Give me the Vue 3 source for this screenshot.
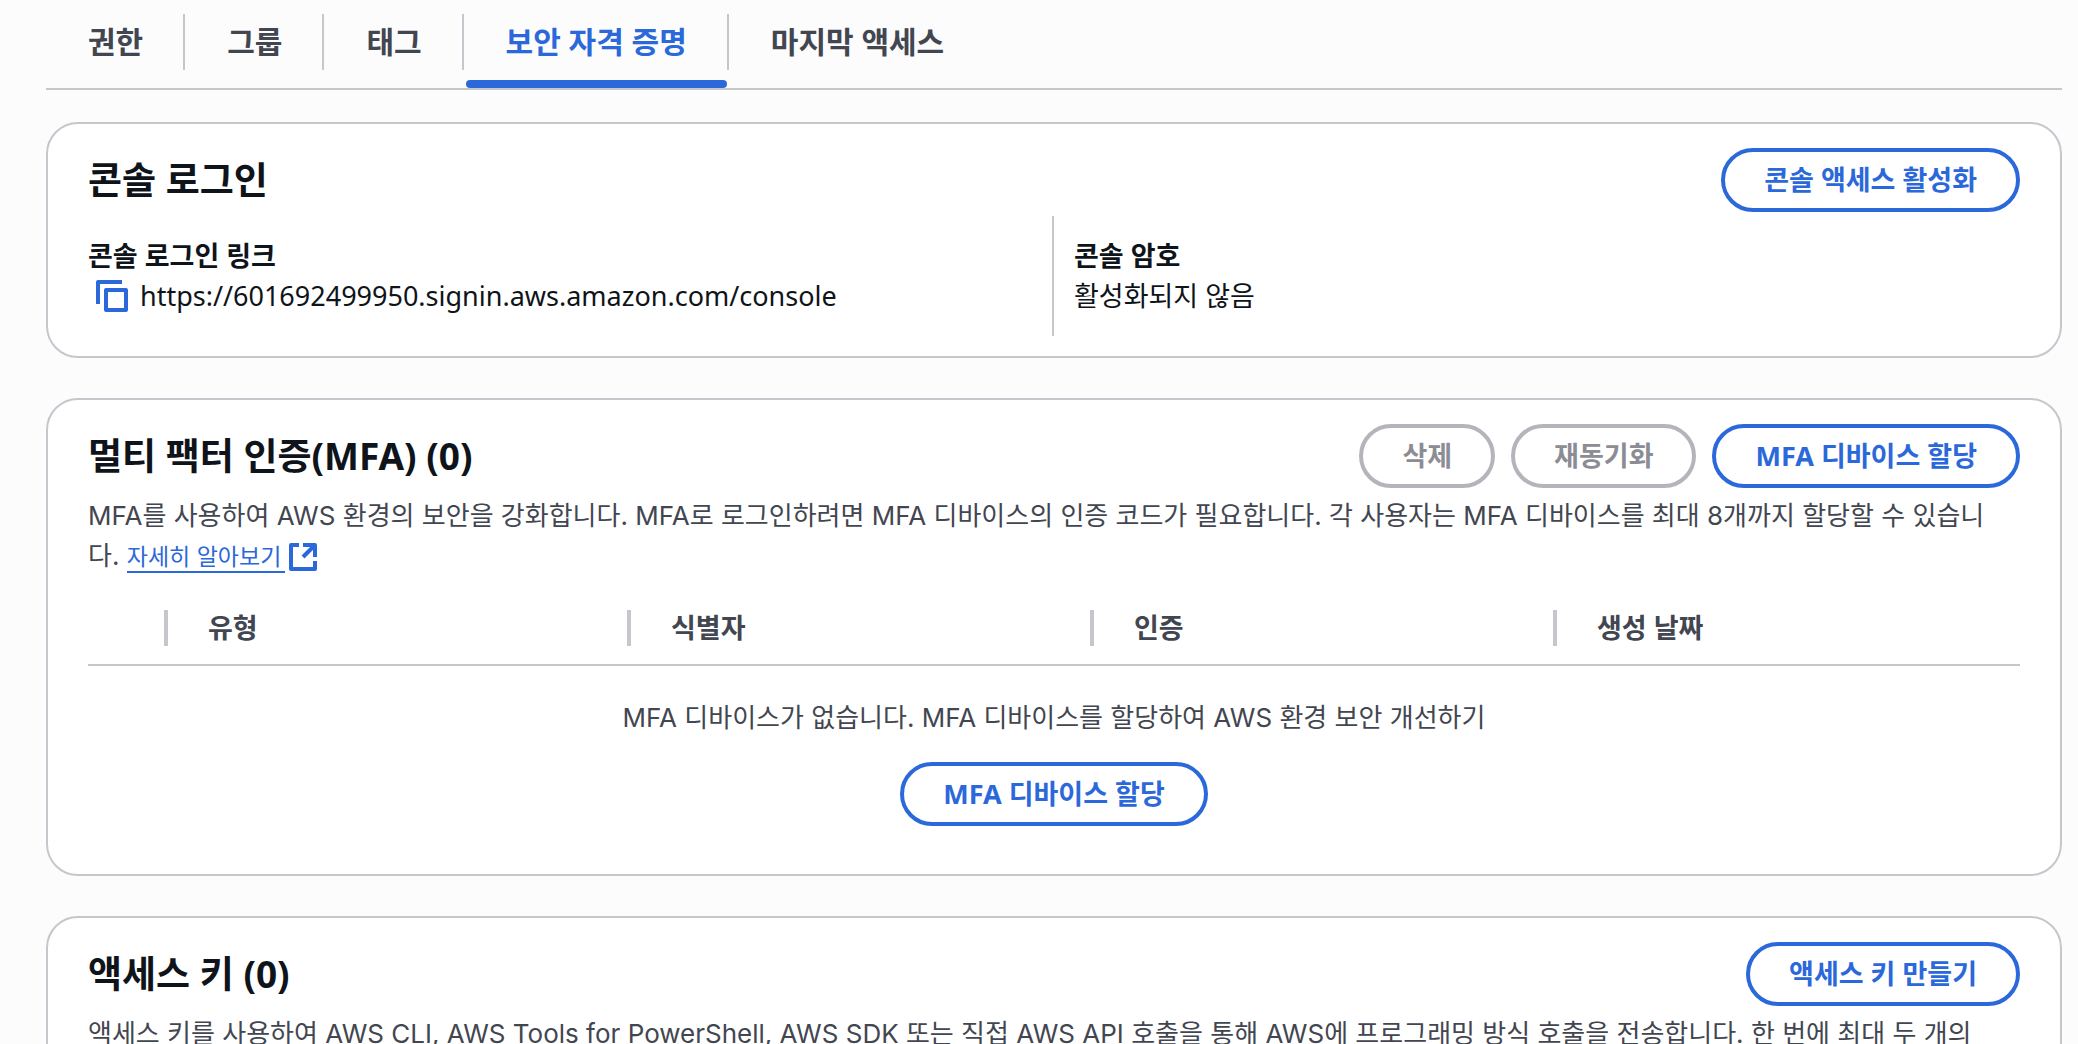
<template>
  <main class="page">
    <nav class="tabs">
      <div v-for="tab in tabs" :key="tab" class="tab-item">
        <button class="tab" :class="{ active: tab === activeTab }" @click="activeTab = tab">
          {{ tab }}
        </button>
      </div>
    </nav>

    <section class="card">
      <header class="card-header">
        <h2>콘솔 로그인</h2>
        <button class="btn">콘솔 액세스 활성화</button>
      </header>
      <dl class="pairs">
        <div class="pair">
          <dt>콘솔 로그인 링크</dt>
          <dd class="link-value">
            <button class="copy" aria-label="복사">
              <svg viewBox="0 0 32 32" width="32" height="32" fill="none" stroke="currentColor" stroke-width="4" stroke-linejoin="round">
                <path d="M2 24V2H26" />
                <path d="M10 10H30V30H10Z" />
              </svg>
            </button>
            <span>https://601692499950.signin.aws.amazon.com/console</span>
          </dd>
        </div>
        <div class="pair divided">
          <dt>콘솔 암호</dt>
          <dd>활성화되지 않음</dd>
        </div>
      </dl>
    </section>

    <section class="card">
      <header class="card-header">
        <h2>멀티 팩터 인증(MFA) (0)</h2>
        <div class="actions">
          <button class="btn" disabled>삭제</button>
          <button class="btn" disabled>재동기화</button>
          <button class="btn">MFA 디바이스 할당</button>
        </div>
      </header>
      <p class="description">
        MFA를 사용하여 AWS 환경의 보안을 강화합니다. MFA로 로그인하려면 MFA 디바이스의 인증 코드가 필요합니다. 각 사용자는 MFA 디바이스를 최대 8개까지 할당할 수 있습니다.
        <a href="#" class="more"><span>자세히 알아보기</span><svg viewBox="0 0 28 28" width="28" height="28" fill="none" stroke="currentColor" stroke-width="4">
          <path d="M10 2H2V26H26V18" stroke-linejoin="round" />
          <path d="M14 2H26V14" stroke-linejoin="round" />
          <path d="M26 2L14 14" />
        </svg></a>
      </p>
      <table class="devices">
        <thead>
          <tr>
            <th class="select-col"></th>
            <th v-for="column in columns" :key="column">{{ column }}</th>
          </tr>
        </thead>
        <tbody>
          <tr>
            <td colspan="5">
              <p>MFA 디바이스가 없습니다. MFA 디바이스를 할당하여 AWS 환경 보안 개선하기</p>
              <button class="btn">MFA 디바이스 할당</button>
            </td>
          </tr>
        </tbody>
      </table>
    </section>

    <section class="card">
      <header class="card-header">
        <h2>액세스 키 (0)</h2>
        <button class="btn">액세스 키 만들기</button>
      </header>
      <p class="description">
        액세스 키를 사용하여 AWS CLI, AWS Tools for PowerShell, AWS SDK 또는 직접 AWS API 호출을 통해 AWS에 프로그래밍 방식 호출을 전송합니다. 한 번에 최대 두 개의
      </p>
    </section>
  </main>
</template>

<script setup>
import { ref } from 'vue'

const tabs = ['권한', '그룹', '태그', '보안 자격 증명', '마지막 액세스']
const activeTab = ref('보안 자격 증명')
const columns = ['유형', '식별자', '인증', '생성 날짜']
</script>

<style>
body {
  margin: 0;
  background: #fcfcfd;
}
</style>

<style scoped>
.page {
  box-sizing: border-box;
  height: 100vh;
  overflow: hidden;
  padding: 0 16px 0 46px;
  background: #fcfcfd;
  color: #0f141a;
  font-family: "Noto Sans", "Noto Sans CJK KR", sans-serif;
  font-size: 27px;
  line-height: 40px;
}
button {
  font-family: inherit;
  cursor: pointer;
}
.tabs {
  display: flex;
  border-bottom: 2px solid #c6c6cd;
  margin-bottom: 32px;
}
.tab-item {
  position: relative;
  padding: 0 2px;
}
.tab-item:not(:last-child)::after {
  content: "";
  position: absolute;
  top: 14px;
  right: 0;
  width: 2px;
  height: 56px;
  background: #c6c6cd;
}
.tab {
  display: block;
  height: 88px;
  padding: 0 40px 8px;
  border: 0;
  background: none;
  color: #424650;
  font-size: 30px;
  font-weight: 700;
  position: relative;
}
.tab.active {
  color: #2b68da;
}
.tab.active::after {
  content: "";
  position: absolute;
  left: 0;
  right: 0;
  bottom: 0;
  height: 8px;
  border-radius: 4px;
  background: #2b68da;
}
.card {
  border: 2px solid #c6c6cd;
  border-radius: 32px;
  background: #fff;
  padding: 24px 40px 20px;
  margin-bottom: 40px;
}
.card-header {
  display: flex;
  align-items: center;
  justify-content: space-between;
}
h2 {
  margin: 0;
  font-size: 37px;
  line-height: 48px;
  font-weight: 700;
}
.actions {
  display: flex;
  gap: 16px;
}
.btn {
  height: 64px;
  padding: 0 39px 4px;
  border: 4px solid #2b68da;
  border-radius: 32px;
  background: #fff;
  color: #2b68da;
  font-size: 27px;
  font-weight: 700;
  white-space: nowrap;
}
.btn:disabled {
  border-color: #b4b4bb;
  color: #8c8c94;
  cursor: default;
}
.pairs {
  display: grid;
  grid-template-columns: 1fr 1fr;
  margin: 4px 0 0;
}
.pair {
  padding: 20px 0;
}
.divided {
  margin-left: -2px;
  padding-left: 20px;
  border-left: 2px solid #c6c6cd;
}
dt {
  font-weight: 700;
}
dd {
  margin: 0;
}
.link-value {
  display: flex;
  align-items: center;
  gap: 12px;
  padding-left: 8px;
}
.copy {
  display: flex;
  padding: 0;
  border: 0;
  background: none;
  color: #2b68da;
}
.description,
.devices p {
  font-family: Inter, "Noto Sans CJK KR", sans-serif;
  font-size: 26px;
}
.description {
  margin: 8px 0 16px;
  padding-right: 16px;
  color: #424650;
}
.more {
  color: #2b68da;
  font-size: 23px;
  line-height: 32px;
  text-decoration: none;
  white-space: nowrap;
}
.more span {
  padding-right: 4px;
  border-bottom: 2px solid #2b68da;
}
.more svg {
  margin-left: 4px;
  vertical-align: -6px;
}
.devices {
  width: 100%;
  table-layout: fixed;
  border-collapse: separate;
  border-spacing: 0;
  color: #424650;
}
.devices th {
  position: relative;
  height: 74px;
  box-sizing: border-box;
  padding: 0 40px;
  border-bottom: 2px solid #c6c6cd;
  text-align: left;
  font-weight: 700;
}
.devices th:not(:last-child)::after {
  content: "";
  position: absolute;
  top: 18px;
  right: 0;
  width: 4px;
  height: 36px;
  background: #c6c6cd;
}
.devices .select-col {
  width: 80px;
  padding: 0;
}
.devices td {
  padding: 32px 0 28px;
  text-align: center;
}
.devices p {
  margin: 0 0 24px;
}
.devices .btn {
  display: block;
  margin: 0 auto;
}
</style>
